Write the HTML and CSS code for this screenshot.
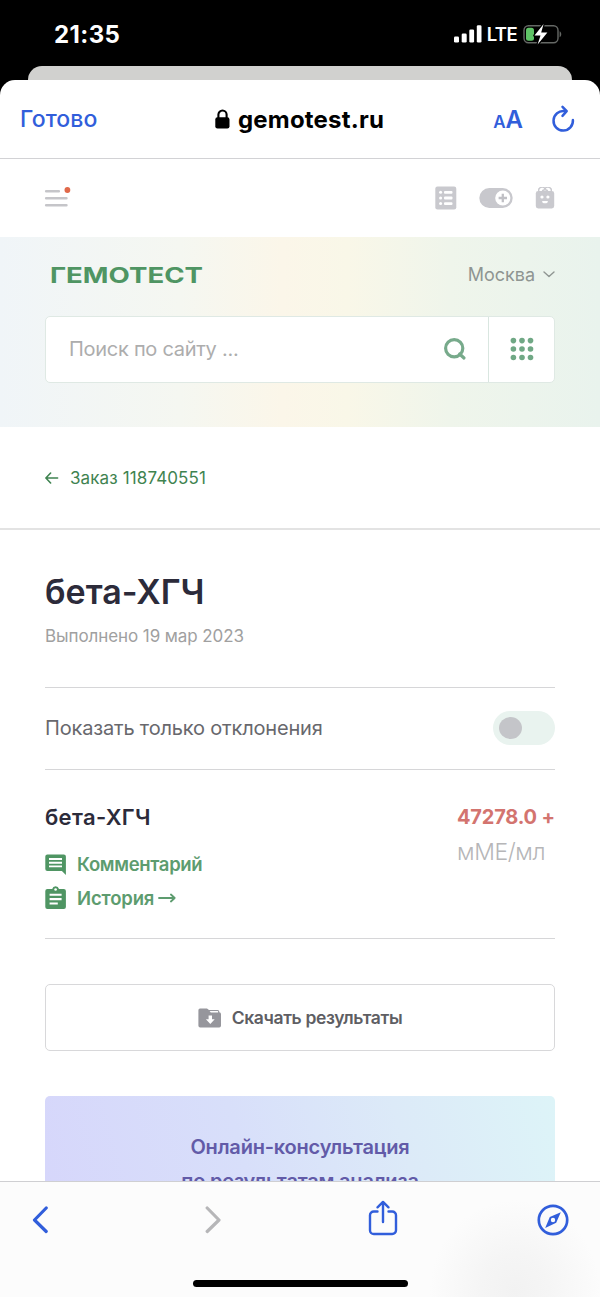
FILE: index.html
```html
<!DOCTYPE html>
<html lang="ru">
<head>
<meta charset="utf-8">
<title>gemotest.ru</title>
<link rel="stylesheet" href="styles.css">
</head>
<body>
<div class="phone">
  <header class="status">
    <span class="clock">21:35</span>
    <div class="status-icons">
      <svg class="signal" width="28" height="18" viewBox="0 0 28 18" fill="#fff"><rect x="0" y="11.5" width="5" height="6" rx="1.3"/><rect x="7.7" y="8.5" width="5" height="9" rx="1.3"/><rect x="15.3" y="4.5" width="4.8" height="13" rx="1.3"/><rect x="22.8" y="0.3" width="4.7" height="17.2" rx="1.3"/></svg>
      <span class="lte">LTE</span>
      <svg class="battery" width="40" height="22" viewBox="0 0 40 22"><rect x="1" y="2.7" width="34" height="17" rx="4.5" fill="none" stroke="#656865" stroke-width="1.4"/><path d="M36.6 8.2c2.2 1 2.2 5 0 6z" fill="#656865"/><rect x="3" y="4.8" width="8" height="13" rx="2.5" fill="#5fc466"/><path d="M20.6 1 11.5 12.6h6L14.6 21.5l9.8-12h-6.2z" fill="#fff" stroke="#000" stroke-width="2.6" paint-order="stroke" stroke-linejoin="round"/></svg>
    </div>
  </header>
  <div class="back-card"></div>

  <main class="sheet">
    <div class="browser-bar">
      <span class="done">Готово</span>
      <div class="address">
        <svg width="15" height="20" viewBox="0 0 15 20"><path d="M3.4 9V5.6a4.1 4.1 0 0 1 8.2 0V9" fill="none" stroke="#000" stroke-width="2.1"/><rect x="0.3" y="8.2" width="14.2" height="11.2" rx="2.2"/></svg>
        <span class="host">gemotest.ru</span>
      </div>
      <div class="browser-actions">
        <span class="aa"><small>A</small>A</span>
        <svg width="24" height="28" viewBox="0 0 24 28" fill="none" stroke="#315edb" stroke-width="2.5" stroke-linecap="round" stroke-linejoin="round"><path d="M13.5 6.2A9.7 9.7 0 1 0 21.9 15"/><path d="M11.5 1.800 15.700 6.200 11.500 10.800"/></svg>
      </div>
    </div>

    <nav class="site-nav">
      <svg width="28" height="22" viewBox="0 0 28 22"><path d="M2.200 4.200h12.600M2.200 11.200h20.200M2.200 18.200h20.200" stroke="#c5c5c9" stroke-width="2.6" stroke-linecap="round"/><circle cx="23.400" cy="3" r="2.9" fill="#e0694a"/></svg>
      <div class="nav-icons">
        <svg width="22" height="24" viewBox="0 0 22 24"><rect x="0.3" y="0.6" width="21" height="22.8" rx="2.2" fill="#c9c9ce"/><g fill="#fff"><circle cx="5.6" cy="6.3" r="1.5"/><circle cx="5.6" cy="12" r="1.5"/><circle cx="5.6" cy="17.6" r="1.5"/><rect x="9" y="4.9" width="8.5" height="2.9" rx="1"/><rect x="9" y="10.6" width="8.5" height="2.9" rx="1"/><rect x="9" y="16.2" width="8.5" height="2.9" rx="1"/></g></svg>
        <svg width="34" height="22" viewBox="0 0 34 22"><rect x="0.3" y="1" width="33.4" height="20" rx="10" fill="#c8c8cd"/><circle cx="23.8" cy="11" r="7.6" fill="#fff"/><path d="M23.8 6.8v8.4M19.6 11H28" stroke="#c0c0c5" stroke-width="2.300"/></svg>
        <svg width="20" height="22" viewBox="0 0 20 22"><rect x="0.8" y="4" width="18.4" height="17.4" rx="2.4" fill="#c9c9ce"/><path d="M4.200 5a3.200 3.200 0 0 1 5.800-3.200A3.200 3.200 0 0 1 15.800 5M7.200 5.500a2.800 2.800 0 0 1 5.600 0" fill="none" stroke="#c9c9ce" stroke-width="1.4"/><circle cx="7" cy="10" r="1.6" fill="#fff"/><circle cx="12.9" cy="10" r="1.6" fill="#fff"/><path d="M7.200 14h5.600v.7a2 2 0 0 1-2 1.600H9.200a2 2 0 0 1-2-1.600z" fill="#fff"/></svg>
      </div>
    </nav>

    <section class="hero">
      <div class="brand-row">
        <svg class="logo" width="156" height="26" viewBox="0 0 156 26"><text x="0" y="22" textLength="153" lengthAdjust="spacingAndGlyphs">ГЕМОТЕСТ</text></svg>
        <div class="city"><span>Москва</span><svg width="12" height="8" viewBox="0 0 12 8" fill="none" stroke="#8f9592" stroke-width="1.4" stroke-linecap="round" stroke-linejoin="round"><path d="M1 2 6 6.500l5-4.500"/></svg></div>
      </div>
      <div class="search">
        <div class="search-field">
          <span class="placeholder">Поиск по сайту ...</span>
          <svg width="24" height="24" viewBox="0 0 24 24" fill="none" stroke="#77aa8b" stroke-width="3.200"><circle cx="11.200" cy="11.200" r="8.600"/><path d="M16.600 17l4.400 4" stroke-linecap="round"/></svg>
        </div>
        <div class="search-menu">
          <svg width="24" height="24" viewBox="0 0 24 24" fill="#70a885"><circle cx="3.400" cy="3.600" r="2.800"/><circle cx="12" cy="3.600" r="2.800"/><circle cx="20.500" cy="3.600" r="2.800"/><circle cx="3.400" cy="12" r="2.800"/><circle cx="12" cy="12" r="2.800"/><circle cx="20.500" cy="12" r="2.800"/><circle cx="3.400" cy="20.500" r="2.800"/><circle cx="12" cy="20.500" r="2.800"/><circle cx="20.500" cy="20.500" r="2.800"/></svg>
        </div>
      </div>
    </section>

    <div class="order">
      <svg width="14" height="12" viewBox="0 0 14 12" fill="none" stroke="#3f8350" stroke-width="1.600" stroke-linecap="round" stroke-linejoin="round"><path d="M12.600 6H1M5.600 1 .900 6l4.700 5"/></svg>
      <span>Заказ 118740551</span>
    </div>

    <section class="report">
      <h1>бета-ХГЧ</h1>
      <p class="date">Выполнено 19 мар 2023</p>
      <div class="filter">
        <span>Показать только отклонения</span>
        <div class="toggle"><i></i></div>
      </div>
      <div class="result">
        <div class="test">
          <h2>бета-ХГЧ</h2>
          <div class="link comment">
            <svg width="22" height="22" viewBox="0 0 22 22"><path d="M2.400 1.400h16.400a2.100 2.100 0 0 1 2.100 2.100V22l-4-4H2.400a2.100 2.100 0 0 1-2.100-2.100V3.500A2.100 2.100 0 0 1 2.400 1.400z" fill="#4f9563"/><path d="M4 6h13M4 9.700h13M4 13.400h13" stroke="#fff" stroke-width="1.900"/></svg>
            <span>Комментарий</span>
          </div>
          <div class="link history">
            <svg width="22" height="24" viewBox="0 0 22 24"><path d="M2.400 3h4.800a3.500 3.500 0 0 1 6.800 0h4.800a2.100 2.100 0 0 1 2.100 2.100v15.800a2.100 2.100 0 0 1-2.100 2.100H2.400a2.100 2.100 0 0 1-2.100-2.100V5.100A2.100 2.100 0 0 1 2.400 3z" fill="#4f9563"/><circle cx="10.600" cy="3.500" r="1.300" fill="#fff"/><path d="M4.600 8.700h12M4.600 13.100h12M4.600 17.500h8.200" stroke="#fff" stroke-width="2.100"/></svg>
            <span>История</span>
            <svg class="arrow" width="18" height="12" viewBox="0 0 18 12" fill="none" stroke="#5d9c6f" stroke-width="1.800" stroke-linecap="round" stroke-linejoin="round"><path d="M1 6h15.500M12.900 2.500 16.700 6l-3.800 3.500"/></svg>
          </div>
        </div>
        <div class="value">
          <strong>47278.0 +</strong>
          <span>мМЕ/мл</span>
        </div>
      </div>
      <div class="download">
        <svg width="24" height="20" viewBox="0 0 24 20"><path fill="#96969c" fill-rule="evenodd" d="M2.200.500h6.800l2 1.600h8.600a1.700 1.700 0 0 1 1.700 1.700v.500A1.800 1.800 0 0 1 23 6v11.800a1.800 1.800 0 0 1-1.800 1.700H2.200A1.800 1.800 0 0 1 .400 17.800V2.200A1.700 1.700 0 0 1 2.200.500zM11.600 3.100l1.200 1.300h7.300V3.100z"/><path d="M10.600 7.600h3.400v3.700h2.700L12.300 16l-4.400-4.700h2.700z" fill="#fff"/></svg>
        <span>Скачать результаты</span>
      </div>
      <div class="consult">
        <span>Онлайн-консультация</span>
        <span>по результатам анализа</span>
      </div>
    </section>
  </main>

  <footer class="bottom-bar">
    <div class="tabs">
      <svg width="18" height="28" viewBox="0 0 18 28" fill="none" stroke="#315edb" stroke-width="3.200" stroke-linecap="round" stroke-linejoin="round"><path d="M15.200 2 3.500 14l11.700 11.500"/></svg>
      <svg class="forward" width="18" height="28" viewBox="0 0 18 28" fill="none" stroke="#b6b6b8" stroke-width="3.200" stroke-linecap="round" stroke-linejoin="round"><path d="M2.200 2 14 14 2.200 25.500"/></svg>
      <svg class="share" width="30" height="36" viewBox="0 0 30 36" fill="none" stroke="#315edb" stroke-width="2.400" stroke-linecap="round" stroke-linejoin="round"><path d="M9.500 11.500H5.800a3.800 3.800 0 0 0-3.800 3.800v14.900A3.800 3.800 0 0 0 5.800 34h18.400a3.800 3.800 0 0 0 3.800-3.800V15.300a3.800 3.800 0 0 0-3.800-3.800h-3.700"/><path d="M15 22V2.500M9.500 7.300 15 1.900l5.500 5.400"/></svg>
      <svg class="compass" width="32" height="32" viewBox="0 0 32 32"><circle cx="16" cy="16" r="14.200" fill="none" stroke="#315edb" stroke-width="2.700"/><path fill="#315edb" fill-rule="evenodd" d="M23.800 8.200 19.200 18.800 8.200 23.900 12.800 13.100zM18.200 16a2.200 2.200 0 1 0-4.400 0 2.200 2.200 0 1 0 4.400 0z"/></svg>
    </div>
    <div class="home-indicator"></div>
  </footer>
</div>
</body>
</html>
```
FILE: styles.css
```css
* { box-sizing: border-box; }
body { margin: 0; background: #000; font-family: Inter, "Noto Sans", sans-serif; }
h1, h2, p { margin: 0; }
svg { display: block; flex: none; }
span, strong, h1, h2, p { white-space: nowrap; }

.phone { width: 600px; height: 1297px; overflow: hidden; display: flex; flex-direction: column; background: #000; }

.status { flex: none; height: 66px; padding: 2px 37px 0 54px; display: flex; align-items: center; justify-content: space-between; color: #fff; }
.clock { font-size: 24px; font-weight: 700; letter-spacing: 0.4px; }
.status-icons { display: flex; align-items: center; }
.lte { font-size: 18.5px; font-weight: 600; letter-spacing: -0.6px; margin: 0 6px 0 5px; }
.back-card { flex: none; height: 14px; margin: 0 28px; border-radius: 14px 14px 0 0; background: #d1d1cf; }

.sheet { flex: 1; min-height: 0; overflow: hidden; background: #fff; border-radius: 15px 15px 0 0; }
.browser-bar { height: 79px; padding: 0 25px 0 20px; display: grid; grid-template-columns: 1fr auto 1fr; align-items: center; border-bottom: 1px solid #d2d2d5; }
.done { font-size: 23px; font-weight: 500; letter-spacing: 0.1px; color: #315edb; }
.address { display: flex; align-items: center; gap: 8px; margin-left: 4px; }
.host { font-size: 24px; font-weight: 700; letter-spacing: 0.2px; color: #000; }
.browser-actions { display: flex; justify-content: flex-end; align-items: center; gap: 28px; }
.aa { font-size: 24px; font-weight: 600; color: #315edb; }
.aa small { font-size: 17px; }

.site-nav { height: 78px; padding: 0 45px 1px 44px; display: flex; align-items: center; justify-content: space-between; }
.nav-icons { display: flex; align-items: center; gap: 22px; }

.hero { height: 190px; padding: 26px 45px 0; background: linear-gradient(90deg, #f0f5f8 0%, #f5f7f1 30%, #fbf6e9 47%, #f9f7e8 58%, #eff5eb 75%, #e9f3ed 100%); }
.brand-row { height: 22px; display: flex; align-items: center; justify-content: space-between; padding-left: 5px; }
.logo text { font-size: 21.5px; font-weight: 700; fill: #4f9563; }
.city { display: flex; align-items: center; gap: 8px; font-size: 18px; color: #8f9592; }
.search { margin-top: 31px; height: 67px; border: 1.5px solid #dfe9e4; border-radius: 5px; background: #fff; display: flex; }
.search-field { flex: 1; padding: 0 21px 2px 23px; display: flex; align-items: center; justify-content: space-between; }
.placeholder { font-size: 20px; letter-spacing: -0.28px; color: #adadad; }
.search-menu { width: 66px; padding-bottom: 2px; border-left: 1.5px solid #d9e6e0; display: flex; align-items: center; justify-content: center; }

.order { height: 103px; padding: 0 45px; display: flex; align-items: center; gap: 11px; border-bottom: 2px solid #e3e3e3; font-size: 17px; letter-spacing: 0.12px; color: #3f8350; }

.report { padding: 41px 45px 0; }
h1 { font-size: 34px; line-height: 42px; font-weight: 600; color: #2c2b3a; }
.date { margin-top: 12px; font-size: 17px; line-height: 22px; letter-spacing: -0.08px; color: #a0a0a0; }
.filter { margin-top: 40px; height: 83px; padding-bottom: 2px; border-top: 1px solid #d6d6d8; border-bottom: 1px solid #d6d6d8; display: flex; align-items: center; justify-content: space-between; font-size: 20px; color: #68686d; }
.filter span { letter-spacing: -0.18px; }
.toggle { width: 62px; height: 34px; padding: 6px; border-radius: 17px; background: #e9f3ef; }
.toggle i { display: block; width: 23px; height: 22px; border-radius: 50%; background: #c4c5c9; }
.result { height: 169px; border-bottom: 1px solid #d6d6d8; display: flex; justify-content: space-between; }
h2 { margin-top: 33px; font-size: 22px; line-height: 28px; letter-spacing: 0.32px; font-weight: 600; color: #2c2b3a; }
.link { height: 34px; display: flex; align-items: center; font-size: 18.5px; letter-spacing: -0.35px; font-weight: 600; color: #5d9c6f; }
.link span { margin-left: 10px; }
.comment { margin-top: 16px; }
.history span { letter-spacing: -0.15px; }
.arrow { margin-left: 4px; }
.value { width: 98px; padding-top: 33px; }
.value strong { display: block; font-size: 20px; line-height: 28px; letter-spacing: -0.2px; font-weight: 700; color: #d3746f; }
.value span { display: block; margin-top: 6px; font-size: 23px; line-height: 30px; letter-spacing: -0.4px; font-weight: 300; color: #b6b6b8; }
.download { margin-top: 45px; height: 67px; border: 1.5px solid #d8d8da; border-radius: 5px; display: flex; align-items: center; justify-content: center; gap: 10px; font-size: 17.5px; letter-spacing: -0.38px; font-weight: 600; color: #5e5e63; }
.consult { margin-top: 45px; height: 140px; padding-top: 34px; border-radius: 5px 5px 0 0; background: linear-gradient(75deg, #d6d6fb 0%, #d8dffa 40%, #dceaf8 70%, #ddf4f8 100%); text-align: center; font-size: 20px; line-height: 34px; letter-spacing: -0.2px; font-weight: 600; color: #625ba8; }
.consult span { display: block; }

.bottom-bar { flex: none; height: 116px; border-top: 1px solid #cfcfd2; background: radial-gradient(ellipse 85px 90px at 515px 108px, #f2f2f2 0%, #f5f5f5 40%, #fcfcfc 100%); }
.tabs { height: 75px; padding: 0 31px; display: flex; align-items: center; }
.forward { margin-left: 156px; }
.share { margin-left: 145px; margin-top: -3px; }
.compass { margin-left: auto; }
.home-indicator { width: 215px; height: 7px; margin: 23px auto 0; border-radius: 4px; background: #000; }
```
